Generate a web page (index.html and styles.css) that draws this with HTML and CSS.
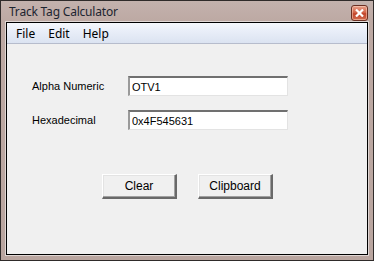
FILE: index.html
```html
<!DOCTYPE html>
<html lang="en">
<head>
  <meta charset="UTF-8">
  <title>Track Tag Calculator</title>
  <link rel="stylesheet" href="styles.css">
</head>
<body>
  <div class="window">
    <div class="titlebar">
      <span class="title">Track Tag Calculator</span>
      <button class="close" aria-label="Close">
        <svg width="9" height="8" viewBox="0 0 9 8">
          <path d="M1 0.5 L8 7.5 M8 0.5 L1 7.5" stroke="#fff" stroke-width="2.2"/>
        </svg>
      </button>
    </div>

    <div class="client">
      <div class="menubar">
        <span class="menu-item">File</span>
        <span class="menu-item">Edit</span>
        <span class="menu-item">Help</span>
      </div>

      <div class="form">
        <div class="row">
          <label for="alpha">Alpha Numeric</label>
          <input type="text" id="alpha" value="OTV1">
        </div>
        <div class="row">
          <label for="hex">Hexadecimal</label>
          <input type="text" id="hex" value="0x4F545631">
        </div>
        <div class="btn-row">
          <button class="btn">Clear</button>
          <button class="btn">Clipboard</button>
        </div>
      </div>
    </div>
  </div>
</body>
</html>
```

FILE: styles.css
```css
* {
  box-sizing: border-box;
}

body {
  margin: 0;
  background: #fff;
}

.window {
  position: relative;
  width: 374px;
  height: 261px;
  border: 1px solid #2f2b2a;
  background: linear-gradient(to bottom, #c3b2ad 0, #bda9a3 20px, #b9a59f 100%);
  padding: 0 5px 5px 5px;
  display: flex;
  flex-direction: column;
}

.titlebar {
  height: 21px;
  display: flex;
  align-items: center;
  padding-left: 3px;
}

.title {
  font-family: 'Noto Sans', sans-serif;
  font-size: 12px;
  color: #1c2530;
  letter-spacing: -0.2px;
}

.close {
  position: absolute;
  top: 4px;
  right: 5px;
  width: 17px;
  height: 16px;
  padding: 0;
  border: 1px solid #6b2f22;
  border-radius: 3px;
  background: linear-gradient(to bottom, #e9a08a 0, #d4684c 45%, #c2452b 55%, #d06a4e 100%);
  box-shadow: inset 0 0 0 1px rgba(255, 220, 200, 0.5);
  display: flex;
  align-items: center;
  justify-content: center;
}

.client {
  flex: 1;
  border: 1px solid #000;
  box-shadow: 0 0 0 1px rgba(255, 255, 255, 0.55);
  background: #f0f0f0;
  display: flex;
  flex-direction: column;
}

.menubar {
  height: 21px;
  background: linear-gradient(to bottom, #f6f8fc 0, #e9eef8 40%, #dbe3f1 100%);
  border-bottom: 1px solid #b6bccc;
  display: flex;
  align-items: center;
  padding-left: 9px;
  gap: 13px;
  font-family: 'Noto Sans', sans-serif;
  font-size: 12px;
  color: #000;
}

.form {
  padding: 32px 0 0 25px;
  font-family: 'Liberation Sans', Arial, sans-serif;
  font-size: 11px;
  color: #000;
}

.row {
  display: flex;
  align-items: center;
  margin-bottom: 14px;
}

.row label {
  width: 96px;
}

.row input {
  width: 160px;
  height: 20px;
  margin: 0;
  padding: 1px 0 0 2px;
  font-family: 'Liberation Sans', Arial, sans-serif;
  font-size: 11px;
  color: #000;
  background: #fff;
  border-style: solid;
  border-width: 2px 1px 1px 2px;
  border-color: #707070 #e3e3e3 #e3e3e3 #9a9a9a;
  outline: none;
}

.btn-row {
  display: flex;
  gap: 21px;
  margin-top: 44px;
  padding-left: 70px;
}

.btn {
  width: 75px;
  height: 25px;
  padding: 0;
  font-family: 'Liberation Sans', Arial, sans-serif;
  font-size: 12px;
  color: #000;
  background: #f0f0f0;
  border-style: solid;
  border-width: 1px 2px 2px 1px;
  border-color: #fff #696969 #696969 #fff;
  box-shadow: inset -1px -1px 0 #a0a0a0, inset 1px 1px 0 #e3e3e3;
}
```
